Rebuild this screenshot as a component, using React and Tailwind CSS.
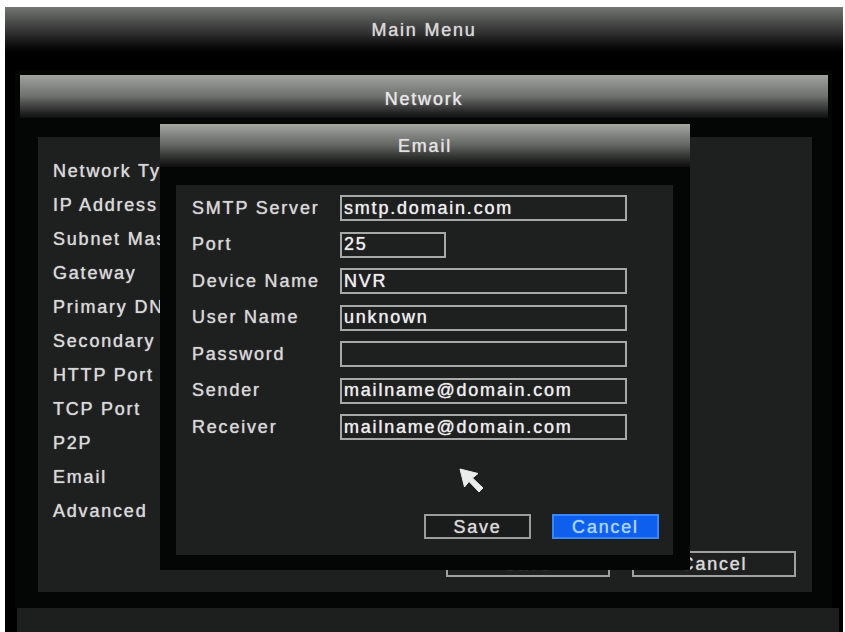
import React from "react";

const font = { fontFamily: '"Liberation Sans", Arial, sans-serif' };

const networkItems = [
  "Network Type",
  "IP Address",
  "Subnet Mask",
  "Gateway",
  "Primary DNS",
  "Secondary DNS",
  "HTTP Port",
  "TCP Port",
  "P2P",
  "Email",
  "Advanced",
];

const emailFields = [
  { label: "SMTP Server", value: "smtp.domain.com", w: "w-[287px]" },
  { label: "Port", value: "25", w: "w-[106px]" },
  { label: "Device Name", value: "NVR", w: "w-[287px]" },
  { label: "User Name", value: "unknown", w: "w-[287px]" },
  { label: "Password", value: "", w: "w-[287px]" },
  { label: "Sender", value: "mailname@domain.com", w: "w-[287px]" },
  { label: "Receiver", value: "mailname@domain.com", w: "w-[287px]" },
];

function Cursor() {
  return (
    <svg width="26" height="26" viewBox="0 0 26 26" className="absolute left-[459px] top-[468px]">
      <path d="M1 1 L19 5.5 L13.5 10 L24 20 L20 24 L10 13.5 L5.5 19 Z" fill="#ececec" stroke="#ececec" strokeWidth="1" strokeLinejoin="round" />
    </svg>
  );
}

function EmailDialog() {
  return (
    <div className="absolute left-[160px] top-[124px] w-[530px] h-[446px] bg-[#040605] flex flex-col">
      <div className="h-[43px] bg-linear-to-b from-[#a6a8a6] via-[#626462] to-[#0c0d0c] flex justify-center pt-[11px]">
        <span className="text-[18px] leading-[22px] tracking-[1.8px] text-[#e2e2e2] [text-shadow:0_0_1px_#e2e2e2]">Email</span>
      </div>
      <div className="flex-1 pl-[16px] pr-[17px] pt-[18px] pb-[15px]">
        <div className="h-full bg-[#1e1f1f] flex flex-col pt-[10px] pl-[16px] pr-[14px] pb-[16px]">
          <div className="flex flex-col gap-[10.5px]">
            {emailFields.map((f) => (
              <div key={f.label} className="flex items-center h-[26px]">
                <span className="w-[148px] text-[18px] tracking-[1.8px] text-[#d6d6d6] whitespace-nowrap [text-shadow:0_0_1px_#d6d6d6]">
                  {f.label}
                </span>
                <div
                  className={`${f.w} h-[26px] border-2 border-[#a8a8a8] flex items-center pl-[2px] text-[18px] tracking-[1.8px] text-[#ececec] whitespace-nowrap overflow-hidden [text-shadow:0_0_1px_#ececec]`}
                >
                  {f.value}
                </div>
              </div>
            ))}
          </div>
          <div className="mt-auto flex justify-end gap-[21px]">
            <button className="w-[107px] h-[25px] border-2 border-[#9c9c9c] bg-[#1a1b1b] text-[18px] leading-none tracking-[1.8px] text-[#d8d8d8] [text-shadow:0_0_1px_#d8d8d8]">
              Save
            </button>
            <button className="w-[107px] h-[25px] border-2 border-[#3a86ff] bg-[#0f5fee] text-[18px] leading-none tracking-[1.8px] text-[#a6d4ff] [text-shadow:0_0_1px_#a6d4ff]">
              Cancel
            </button>
          </div>
        </div>
      </div>
    </div>
  );
}

export default function App() {
  return (
    <div className="relative w-[845px] h-[632px] bg-white overflow-hidden pl-[5px] pt-[7px]" style={font}>
      <div className="w-[838px] h-[625px] bg-black flex flex-col">
        <div className="h-[53px] bg-linear-to-b from-[#747674] via-[#2e2f2e] to-[#000000] flex justify-center pt-[12px]">
          <span className="text-[18px] leading-[22px] tracking-[1.8px] text-[#d6d6d6] [text-shadow:0_0_1px_#d6d6d6]">Main Menu</span>
        </div>

        <div className="mt-[10px] ml-[10px] w-[817px] h-[538px] bg-[#040605] flex flex-col pt-[5px] pl-[5px] pr-[4px]">
          <div className="h-[43px] bg-linear-to-b from-[#a2a4a2] via-[#6e706e] to-[#0e0f0e] flex justify-center pt-[13px]">
            <span className="text-[18px] leading-[22px] tracking-[1.8px] text-[#e6e6e6] [text-shadow:0_0_1px_#e6e6e6]">Network</span>
          </div>
          <div className="mt-[19px] ml-[18px] w-[774px] h-[455px] bg-[#1e2020] flex flex-col pt-[17px] pl-[15px] pr-[16px] pb-[15px]">
            <div className="flex flex-col">
              {networkItems.map((item) => (
                <div
                  key={item}
                  className="h-[34px] flex items-center text-[18px] tracking-[1.8px] text-[#d8d8d8] whitespace-nowrap [text-shadow:0_0_1px_#d8d8d8]"
                >
                  {item}
                </div>
              ))}
            </div>
            <div className="mt-auto flex justify-end gap-[22px]">
              <button className="w-[164px] h-[26px] border-2 border-[#a0a0a0] text-[18px] leading-none tracking-[1.8px] text-[#d8d8d8] [text-shadow:0_0_1px_#d8d8d8]">
                Save
              </button>
              <button className="w-[164px] h-[26px] border-2 border-[#a0a0a0] text-[18px] leading-none tracking-[1.8px] text-[#d8d8d8] [text-shadow:0_0_1px_#d8d8d8]">
                Cancel
              </button>
            </div>
          </div>
        </div>

        <div className="ml-[12px] mr-[4px] flex-1 bg-[#1d1e1e]" />
      </div>

      <EmailDialog />
      <Cursor />
    </div>
  );
}
